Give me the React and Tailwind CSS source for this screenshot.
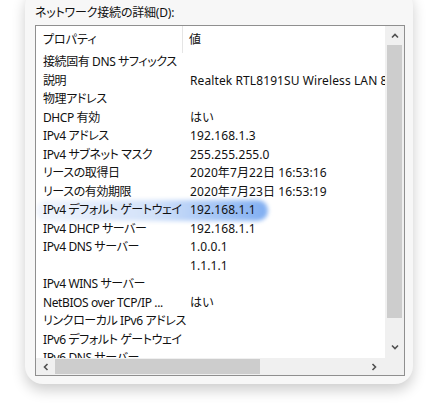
const rows = [
  ["接続固有 DNS サフィックス", ""],
  ["説明", "Realtek RTL8191SU Wireless LAN 802.11n USB 2.0 Network Adapter"],
  ["物理アドレス", ""],
  ["DHCP 有効", "はい"],
  ["IPv4 アドレス", "192.168.1.3"],
  ["IPv4 サブネット マスク", "255.255.255.0"],
  ["リースの取得日", "2020年7月22日  16:53:16"],
  ["リースの有効期限", "2020年7月23日  16:53:19"],
  ["IPv4 デフォルト ゲートウェイ", "192.168.1.1", true],
  ["IPv4 DHCP サーバー", "192.168.1.1"],
  ["IPv4 DNS サーバー", "1.0.0.1"],
  ["", "1.1.1.1"],
  ["IPv4 WINS サーバー", ""],
  ["NetBIOS over TCP/IP ...", "はい"],
  ["リンクローカル IPv6 アドレス", ""],
  ["IPv6 デフォルト ゲートウェイ", ""],
  ["IPv6 DNS サーバー", ""],
];

const Chevron = ({ dir }) => {
  const pts = {
    up: "2,6.5 5,3.5 8,6.5",
    down: "2,3.5 5,6.5 8,3.5",
    left: "6.5,2 3.5,5 6.5,8",
    right: "3.5,2 6.5,5 3.5,8",
  };
  return (
    <svg width="10" height="10" viewBox="0 0 10 10">
      <polyline points={pts[dir]} fill="none" stroke="#505050" strokeWidth="1.6" />
    </svg>
  );
};

const App = () => {
  return (
    <div
      className="min-h-screen bg-white overflow-hidden text-[#111] [font-feature-settings:'palt']"
      style={{ fontFamily: '"Noto Sans", "Noto Sans CJK JP", sans-serif' }}
    >
      <div className="ml-[25px] w-[388px] -mt-[12px] pt-[17px] pb-[8px] rounded-[18px] bg-[#f7f7f7] shadow-[0_6px_14px_rgba(0,0,0,0.2)]">
        <div className="ml-[10px] text-[12px] leading-[16px] tracking-[-0.2px]">
          ネットワーク接続の詳細(D):
        </div>
        <div className="ml-[10px] mt-[4px] w-[370px] h-[351px] border border-[#8f8f8f] bg-white flex flex-col">
          <div className="flex h-[332px]">
            <div className="w-[349px] overflow-hidden text-[12px]">
              <div className="flex h-[27px] items-center">
                <div className="w-[147px] pl-[7px] h-full flex items-center border-r border-[#e5e5e5]">
                  プロパティ
                </div>
                <div className="pl-[6px]">値</div>
              </div>
              {rows.map(([k, v, hl], i) => (
                <div key={i} className="relative flex h-[18.5px] items-center whitespace-nowrap">
                  {hl && (
                    <div className="absolute left-[0px] top-[-1px] w-[232px] h-[21px] rounded-full bg-gradient-to-r from-[#f1f5fd] via-[#d3e2f9] to-[#80aef1] blur-[2px]"></div>
                  )}
                  <div className="relative w-[148px] pl-[7px] shrink-0 tracking-[-0.4px]">{k}</div>
                  <div className="relative pl-[6px] tracking-[0.1px]">{v}</div>
                </div>
              ))}
            </div>
            <div className="w-[19px] bg-[#f0f0f0] flex flex-col items-center">
              <div className="h-[19px] flex items-center justify-center">
                <Chevron dir="up" />
              </div>
              <div className="w-[15px] h-[273px] bg-[#cdcdcd]"></div>
              <div className="flex-1"></div>
              <div className="h-[22px] flex items-center justify-center">
                <Chevron dir="down" />
              </div>
            </div>
          </div>
          <div className="flex h-[17px] bg-[#f0f0f0] items-center">
            <div className="w-[19px] flex items-center justify-center">
              <Chevron dir="left" />
            </div>
            <div className="w-[205px] h-[15px] bg-[#cdcdcd]"></div>
            <div className="flex-1"></div>
            <div className="w-[22px] flex items-center justify-center">
              <Chevron dir="right" />
            </div>
            <div className="w-[19px] h-full bg-[#f0f0f0]"></div>
          </div>
        </div>
      </div>
    </div>
  );
};

export default App;
